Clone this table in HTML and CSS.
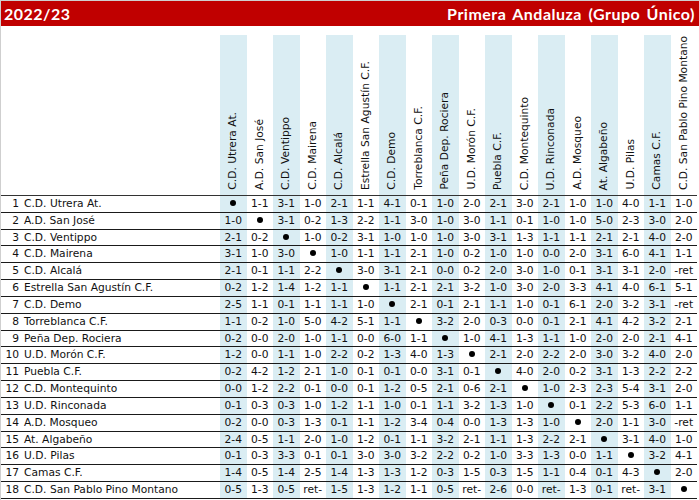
FILE: index.html
```html
<!DOCTYPE html>
<html lang="es">
<head>
<meta charset="utf-8">
<title>Primera Andaluza (Grupo Único) 2022/23</title>
<link rel="stylesheet" href="styles.css">
</head>
<body>
<div class="page">
  <header class="bar">
    <span class="season">2022/23</span>
    <span class="league">Primera Andaluza (Grupo Único)</span>
  </header>
  <table class="grid">
    <colgroup>
      <col class="c-name">
      <col class="c-res"><col class="c-res"><col class="c-res"><col class="c-res"><col class="c-res"><col class="c-res">
      <col class="c-res"><col class="c-res"><col class="c-res"><col class="c-res"><col class="c-res"><col class="c-res">
      <col class="c-res"><col class="c-res"><col class="c-res"><col class="c-res"><col class="c-res"><col class="c-res">
    </colgroup>
    <thead>
      <tr>
        <th class="corner"></th>
        <th><span class="vlabel">C.D. Utrera At.</span></th>
        <th><span class="vlabel">A.D. San José</span></th>
        <th><span class="vlabel">C.D. Ventippo</span></th>
        <th><span class="vlabel">C.D. Mairena</span></th>
        <th><span class="vlabel">C.D. Alcalá</span></th>
        <th><span class="vlabel">Estrella San Agustín C.F.</span></th>
        <th><span class="vlabel">C.D. Demo</span></th>
        <th><span class="vlabel">Torreblanca C.F.</span></th>
        <th><span class="vlabel">Peña Dep. Rociera</span></th>
        <th><span class="vlabel">U.D. Morón C.F.</span></th>
        <th><span class="vlabel">Puebla C.F.</span></th>
        <th><span class="vlabel">C.D. Montequinto</span></th>
        <th><span class="vlabel">U.D. Rinconada</span></th>
        <th><span class="vlabel">A.D. Mosqueo</span></th>
        <th><span class="vlabel">At. Algabeño</span></th>
        <th><span class="vlabel">U.D. Pilas</span></th>
        <th><span class="vlabel">Camas C.F.</span></th>
        <th><span class="vlabel">C.D. San Pablo Pino Montano</span></th>
      </tr>
    </thead>
    <tbody>
      <tr><td class="team"><span class="pos">1</span>C.D. Utrera At.</td><td><span class="dot"></span></td><td>1-1</td><td>3-1</td><td>1-0</td><td>2-1</td><td>1-1</td><td>4-1</td><td>0-1</td><td>1-0</td><td>2-0</td><td>2-1</td><td>3-0</td><td>2-1</td><td>1-0</td><td>1-0</td><td>4-0</td><td>1-1</td><td>1-0</td></tr>
      <tr><td class="team"><span class="pos">2</span>A.D. San José</td><td>1-0</td><td><span class="dot"></span></td><td>3-1</td><td>0-2</td><td>1-3</td><td>2-2</td><td>1-1</td><td>3-0</td><td>1-0</td><td>3-0</td><td>1-1</td><td>0-1</td><td>1-0</td><td>1-0</td><td>5-0</td><td>2-3</td><td>3-0</td><td>2-0</td></tr>
      <tr><td class="team"><span class="pos">3</span>C.D. Ventippo</td><td>2-1</td><td>0-2</td><td><span class="dot"></span></td><td>1-0</td><td>0-2</td><td>3-1</td><td>1-0</td><td>1-0</td><td>1-0</td><td>3-0</td><td>3-1</td><td>1-3</td><td>1-1</td><td>1-1</td><td>2-1</td><td>2-1</td><td>4-0</td><td>2-0</td></tr>
      <tr><td class="team"><span class="pos">4</span>C.D. Mairena</td><td>3-1</td><td>1-0</td><td>3-0</td><td><span class="dot"></span></td><td>1-0</td><td>1-1</td><td>1-1</td><td>2-1</td><td>1-0</td><td>0-2</td><td>1-0</td><td>1-0</td><td>0-0</td><td>2-0</td><td>3-1</td><td>6-0</td><td>4-1</td><td>1-1</td></tr>
      <tr><td class="team"><span class="pos">5</span>C.D. Alcalá</td><td>2-1</td><td>0-1</td><td>1-1</td><td>2-2</td><td><span class="dot"></span></td><td>3-0</td><td>3-1</td><td>2-1</td><td>0-0</td><td>0-2</td><td>2-0</td><td>3-0</td><td>1-0</td><td>0-1</td><td>3-1</td><td>3-1</td><td>2-0</td><td>-ret</td></tr>
      <tr><td class="team"><span class="pos">6</span>Estrella San Agustín C.F.</td><td>0-2</td><td>1-2</td><td>1-4</td><td>1-2</td><td>1-1</td><td><span class="dot"></span></td><td>1-1</td><td>2-1</td><td>2-1</td><td>3-2</td><td>1-0</td><td>3-0</td><td>2-0</td><td>3-3</td><td>4-1</td><td>4-0</td><td>6-1</td><td>5-1</td></tr>
      <tr><td class="team"><span class="pos">7</span>C.D. Demo</td><td>2-5</td><td>1-1</td><td>0-1</td><td>1-1</td><td>1-1</td><td>1-0</td><td><span class="dot"></span></td><td>2-1</td><td>0-1</td><td>2-1</td><td>1-1</td><td>1-0</td><td>0-1</td><td>6-1</td><td>2-0</td><td>3-2</td><td>3-1</td><td>-ret</td></tr>
      <tr><td class="team"><span class="pos">8</span>Torreblanca C.F.</td><td>1-1</td><td>0-2</td><td>1-0</td><td>5-0</td><td>4-2</td><td>5-1</td><td>1-1</td><td><span class="dot"></span></td><td>3-2</td><td>2-0</td><td>0-3</td><td>0-0</td><td>0-1</td><td>2-1</td><td>4-1</td><td>4-2</td><td>3-2</td><td>2-1</td></tr>
      <tr><td class="team"><span class="pos">9</span>Peña Dep. Rociera</td><td>0-2</td><td>0-0</td><td>2-0</td><td>1-0</td><td>1-1</td><td>0-0</td><td>6-0</td><td>1-1</td><td><span class="dot"></span></td><td>1-0</td><td>4-1</td><td>1-3</td><td>1-1</td><td>1-0</td><td>2-0</td><td>2-0</td><td>2-1</td><td>4-1</td></tr>
      <tr><td class="team"><span class="pos">10</span>U.D. Morón C.F.</td><td>1-2</td><td>0-0</td><td>1-1</td><td>1-0</td><td>2-2</td><td>0-2</td><td>1-3</td><td>4-0</td><td>1-3</td><td><span class="dot"></span></td><td>2-1</td><td>2-0</td><td>2-2</td><td>2-0</td><td>3-0</td><td>3-2</td><td>4-0</td><td>2-0</td></tr>
      <tr><td class="team"><span class="pos">11</span>Puebla C.F.</td><td>0-2</td><td>4-2</td><td>1-2</td><td>2-1</td><td>1-0</td><td>0-1</td><td>0-1</td><td>0-0</td><td>3-1</td><td>0-1</td><td><span class="dot"></span></td><td>4-0</td><td>2-0</td><td>0-2</td><td>3-1</td><td>1-3</td><td>2-2</td><td>2-2</td></tr>
      <tr><td class="team"><span class="pos">12</span>C.D. Montequinto</td><td>0-0</td><td>1-2</td><td>2-2</td><td>0-1</td><td>0-0</td><td>0-1</td><td>1-2</td><td>0-5</td><td>2-1</td><td>0-6</td><td>2-1</td><td><span class="dot"></span></td><td>1-0</td><td>2-3</td><td>2-3</td><td>5-4</td><td>3-1</td><td>2-0</td></tr>
      <tr><td class="team"><span class="pos">13</span>U.D. Rinconada</td><td>0-1</td><td>0-3</td><td>0-3</td><td>1-0</td><td>1-2</td><td>1-1</td><td>1-0</td><td>0-1</td><td>1-1</td><td>3-2</td><td>1-3</td><td>1-0</td><td><span class="dot"></span></td><td>0-1</td><td>2-2</td><td>5-3</td><td>6-0</td><td>1-1</td></tr>
      <tr><td class="team"><span class="pos">14</span>A.D. Mosqueo</td><td>0-2</td><td>0-0</td><td>0-3</td><td>1-3</td><td>0-1</td><td>1-1</td><td>1-2</td><td>3-4</td><td>0-4</td><td>0-0</td><td>1-3</td><td>1-3</td><td>1-0</td><td><span class="dot"></span></td><td>2-0</td><td>1-1</td><td>3-0</td><td>-ret</td></tr>
      <tr><td class="team"><span class="pos">15</span>At. Algabeño</td><td>2-4</td><td>0-5</td><td>1-1</td><td>2-0</td><td>1-0</td><td>1-2</td><td>0-1</td><td>1-1</td><td>3-2</td><td>2-1</td><td>1-1</td><td>1-3</td><td>2-2</td><td>2-1</td><td><span class="dot"></span></td><td>3-1</td><td>4-0</td><td>1-0</td></tr>
      <tr><td class="team"><span class="pos">16</span>U.D. Pilas</td><td>0-1</td><td>0-3</td><td>3-3</td><td>0-1</td><td>0-1</td><td>3-0</td><td>3-0</td><td>3-2</td><td>2-2</td><td>0-2</td><td>1-0</td><td>3-3</td><td>1-3</td><td>0-0</td><td>1-1</td><td><span class="dot"></span></td><td>3-2</td><td>4-1</td></tr>
      <tr><td class="team"><span class="pos">17</span>Camas C.F.</td><td>1-4</td><td>0-5</td><td>1-4</td><td>2-5</td><td>1-4</td><td>1-3</td><td>1-3</td><td>1-2</td><td>0-3</td><td>1-5</td><td>0-3</td><td>1-5</td><td>1-1</td><td>0-4</td><td>0-1</td><td>4-3</td><td><span class="dot"></span></td><td>2-0</td></tr>
      <tr><td class="team"><span class="pos">18</span>C.D. San Pablo Pino Montano</td><td>0-5</td><td>1-3</td><td>0-5</td><td>ret-</td><td>1-5</td><td>1-3</td><td>1-2</td><td>1-1</td><td>0-5</td><td>ret-</td><td>2-6</td><td>0-0</td><td>ret-</td><td>1-3</td><td>0-1</td><td>ret-</td><td>3-1</td><td><span class="dot"></span></td></tr>
    </tbody>
  </table>
</div>
</body>
</html>
```

FILE: styles.css
```css
html, body {
  margin: 0;
  padding: 0;
  background: #ffffff;
}

.page {
  width: 698px;
  height: 499px;
  overflow: hidden;
  border-top: 1px solid #cfcfcf;
  border-left: 1px solid #cfcfcf;
  font-family: "DejaVu Sans", Verdana, sans-serif;
  font-size: 10.7px;
  color: #111;
}

.bar {
  height: 25px;
  background: #c00000;
  color: #ffffff;
  display: flex;
  align-items: center;
  justify-content: space-between;
  padding: 0 4px 0 3px;
  font-family: Lato, "Liberation Sans", sans-serif;
  font-weight: 700;
  font-size: 16px;
  letter-spacing: 0.5px;
}

.league {
  word-spacing: 2px;
}

.grid {
  margin-top: 9px;
  border-collapse: separate;
  border-spacing: 0;
  table-layout: fixed;
  width: 696px;
}

.c-name {
  width: 219px;
}

.c-res {
  width: 26.5px;
}

.grid th {
  height: 160px;
  padding: 0 0 2px 0;
  box-sizing: border-box;
  vertical-align: bottom;
  text-align: center;
  font-weight: normal;
  border-bottom: 1px solid #333;
}

.grid thead th {
  height: 161px;
}

.vlabel {
  display: inline-block;
  writing-mode: vertical-rl;
  transform: rotate(180deg);
  white-space: nowrap;
  line-height: 12px;
  color: #111;
}

.grid td {
  height: 15.84px;
  padding: 0;
  text-align: center;
  vertical-align: middle;
  white-space: nowrap;
  line-height: 14px;
  border-bottom: 1px solid #1a1a1a;
}

.grid th:nth-child(even),
.grid td:nth-child(even) {
  background: #daedf3;
}

.grid td.team {
  text-align: left;
  padding-left: 0;
}

.pos {
  display: inline-block;
  width: 18px;
  text-align: right;
  margin-right: 5px;
}

.dot {
  display: inline-block;
  width: 6px;
  height: 6px;
  border-radius: 50%;
  background: #000;
  vertical-align: middle;
  position: relative;
  top: -1px;
}
```
